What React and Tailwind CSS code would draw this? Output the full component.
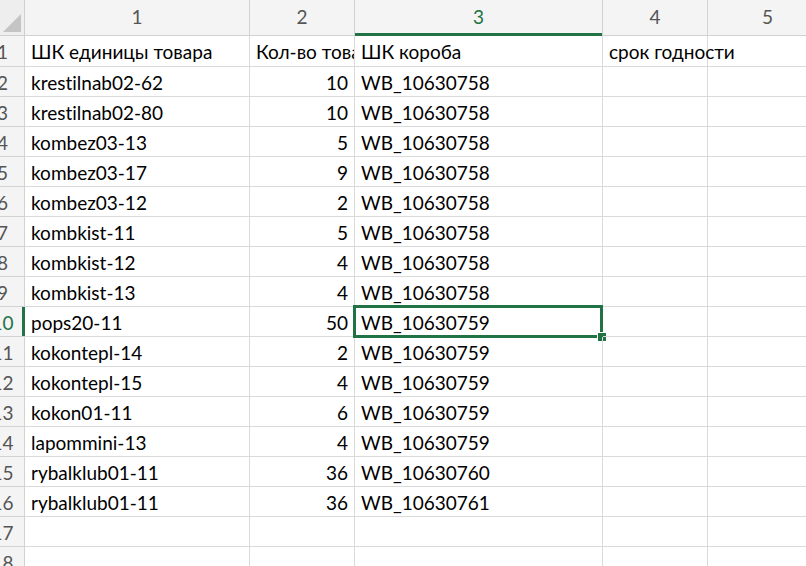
import React from 'react';

const rows = [
    ['ШК единицы товара', 'Кол-во товара', 'ШК короба', 'срок годности'],
    ['krestilnab02-62', 10, 'WB_10630758', ''],
    ['krestilnab02-80', 10, 'WB_10630758', ''],
    ['kombez03-13', 5, 'WB_10630758', ''],
    ['kombez03-17', 9, 'WB_10630758', ''],
    ['kombez03-12', 2, 'WB_10630758', ''],
    ['kombkist-11', 5, 'WB_10630758', ''],
    ['kombkist-12', 4, 'WB_10630758', ''],
    ['kombkist-13', 4, 'WB_10630758', ''],
    ['pops20-11', 50, 'WB_10630759', ''],
    ['kokontepl-14', 2, 'WB_10630759', ''],
    ['kokontepl-15', 4, 'WB_10630759', ''],
    ['kokon01-11', 6, 'WB_10630759', ''],
    ['lapommini-13', 4, 'WB_10630759', ''],
    ['rybalklub01-11', 36, 'WB_10630760', ''],
    ['rybalklub01-11', 36, 'WB_10630761', ''],
    ['', '', '', ''],
    ['', '', '', ''],
];

const SELECTED_ROW = 9;

const cell = 'border-r border-b border-[#dadada] flex items-center pt-[3px] text-[19px] text-black whitespace-nowrap';

const App = () => {
    return (
        <div
            className="w-[806px] h-[566px] overflow-hidden bg-white [font-variant-ligatures:none]"
            style={{ fontFamily: 'Lato, "Noto Sans", sans-serif' }}
        >
            <div className="ml-[-19px] grid grid-cols-[44px_225px_105px_248px_105px_120px]">
                {/* шапка колонок */}
                <div className="h-[36px] bg-[#eeeeee] border-r border-b border-[#cfcfcf] relative">
                    <div className="absolute right-[3px] bottom-[3px] w-0 h-0 border-l-[18px] border-l-transparent border-b-[18px] border-b-[#c4c4c4]" />
                </div>
                {[1, 2, 3, 4, 5].map(n => (
                    <div
                        key={n}
                        className={`h-[36px] bg-[#f4f4f4] border-r border-b border-[#d2d2d2] flex items-center justify-center text-[19px] relative ${n === 3 ? 'text-[#217346]' : 'text-[#555555]'}`}
                    >
                        {n}
                        {n === 3 && <div className="absolute left-0 right-0 bottom-[-1px] h-[3px] bg-[#217346]" />}
                    </div>
                ))}

                {rows.map((r, i) => {
                    const sel = i === SELECTED_ROW;
                    const h = i === 0 ? 'h-[31px]' : 'h-[30px]';
                    const textCol2 = typeof r[1] === 'string';
                    return (
                        <React.Fragment key={i}>
                            <div className={`${h} bg-[#f4f4f4] border-r border-b border-[#d2d2d2] flex items-center justify-center pt-[3px] text-[19px] relative ${sel ? 'text-[#217346]' : 'text-[#555555]'}`}>
                                {i + 1}
                                {sel && <div className="absolute top-0 bottom-0 right-[-1px] w-[3px] bg-[#217346]" />}
                            </div>
                            <div className={`${h} ${cell} pl-[6px] overflow-hidden`}>{r[0]}</div>
                            <div className={`${h} ${cell} overflow-hidden ${textCol2 ? 'justify-start pl-[6px]' : 'justify-end pr-[6px]'}`}>
                                {r[1]}
                            </div>
                            <div className={`${h} ${cell} pl-[6px] relative overflow-visible`}>
                                {r[2]}
                                {sel && (
                                    <>
                                        <div className="absolute left-[-2px] top-[-2px] right-[-1px] bottom-[-2px] border-[3px] border-[#217346] pointer-events-none" />
                                        <div className="absolute right-[-5px] bottom-[-6px] w-[10px] h-[10px] bg-[#217346] border border-white" />
                                    </>
                                )}
                            </div>
                            <div className={`${h} ${cell} pl-[6px] relative z-10 overflow-visible`}>{r[3]}</div>
                            <div className={`${h} ${cell}`} />
                        </React.Fragment>
                    );
                })}
            </div>
        </div>
    );
};

export default App;
